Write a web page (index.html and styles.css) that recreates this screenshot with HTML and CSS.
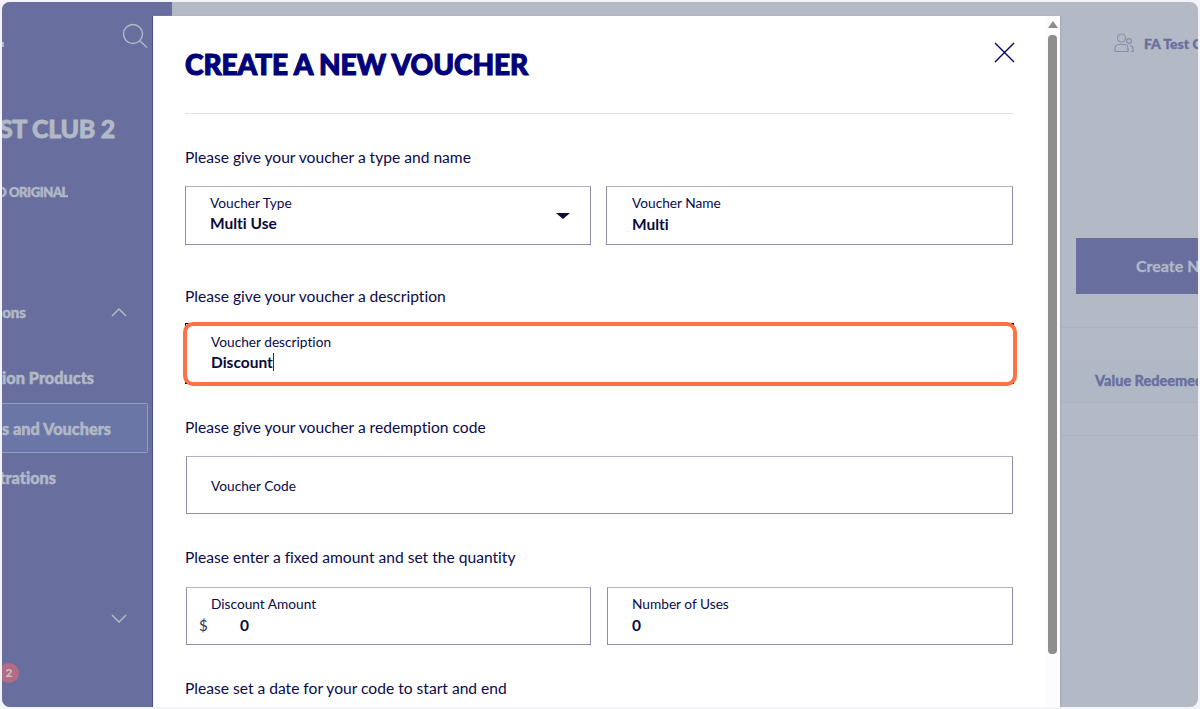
FILE: index.html
```html
<!DOCTYPE html>
<html lang="en">
<head>
    <meta charset="UTF-8">
    <title>Create a new voucher</title>
    <link rel="stylesheet" href="styles.css">
</head>
<body>
    <div class="screen">
        <aside class="sidebar">
            <span class="logo-tail"></span>
            <div class="search-row">
                <svg class="search-icon" width="26" height="26" viewBox="0 0 26 26" fill="none" stroke="#b2b9c6" stroke-width="1.4">
                    <circle cx="11" cy="11" r="9.5"/>
                    <path d="M18 18l7 6.5"/>
                </svg>
            </div>
            <div class="side-text club-name"><span>FA TEST CLUB 2</span></div>
            <div class="side-text club-type"><span>ADIDAS BRAND ORIGINAL</span></div>
            <div class="side-text menu-group">
                <span>Promotions</span>
                <svg class="chevron" width="16" height="9" viewBox="0 0 16 9" fill="none" stroke="#b2b9c6" stroke-width="1.5"><path d="M1 8l7-7 7 7"/></svg>
            </div>
            <div class="side-text menu-item item-products"><span>Promotion Products</span></div>
            <div class="side-text menu-item active"><span>Discounts and Vouchers</span></div>
            <div class="side-text menu-item item-reg"><span>Registrations</span></div>
            <div class="side-text menu-group second">
                <svg class="chevron" width="16" height="9" viewBox="0 0 16 9" fill="none" stroke="#b2b9c6" stroke-width="1.5"><path d="M1 1l7 7 7-7"/></svg>
            </div>
            <div class="badge">2</div>
        </aside>

        <main class="main">
            <div class="topbar">
                <svg width="20" height="20" viewBox="0 0 20 20" fill="none" stroke="#868ea9" stroke-width="1.2">
                    <circle cx="7.500" cy="5" r="4"/>
                    <circle cx="15" cy="8" r="2.4"/>
                    <path d="M1 18.5v-3c0-2.500 2-4 4-4h5c2 0 4 1.500 4 4v3z"/>
                    <path d="M16 12.500c1.600.2 3 1.200 3 3v3h-2"/>
                </svg>
                <span class="user-name">FA Test Club</span>
            </div>
            <button class="create-btn">Create New Voucher</button>
            <div class="table-line first"></div>
            <div class="table-head"><span>Value Redeemed</span></div>
            <div class="table-line second"></div>
        </main>

        <div class="modal">
            <div class="modal-body">
                <div class="modal-head">
                    <h1>CREATE A NEW VOUCHER</h1>
                    <svg class="close-icon" width="21" height="21" viewBox="0 0 21 21" fill="none" stroke="#00007a" stroke-width="1.4"><path d="M1 1l19 19M20 1L1 20"/></svg>
                </div>
                <hr>

                <section class="section section-first">
                    <p class="prompt">Please give your voucher a type and name</p>
                    <div class="field-row">
                        <div class="field select-field">
                            <label>Voucher Type</label>
                            <div class="value">Multi Use</div>
                            <span class="caret"></span>
                        </div>
                        <div class="field name-field">
                            <label>Voucher Name</label>
                            <div class="value">Multi</div>
                        </div>
                    </div>
                </section>

                <section class="section section-focus">
                    <p class="prompt">Please give your voucher a description</p>
                    <div class="field field-focus">
                        <label>Voucher description</label>
                        <div class="value"><span class="typed">Discount</span></div>
                        <div class="highlight"></div>
                    </div>
                </section>

                <section class="section section-code">
                    <p class="prompt">Please give your voucher a redemption code</p>
                    <div class="field field-empty inset">
                        <label>Voucher Code</label>
                    </div>
                </section>

                <section class="section">
                    <p class="prompt">Please enter a fixed amount and set the quantity</p>
                    <div class="field-row inset">
                        <div class="field amount-field">
                            <label>Discount Amount</label>
                            <div class="value amount"><span class="currency">$</span>0</div>
                        </div>
                        <div class="field">
                            <label>Number of Uses</label>
                            <div class="value">0</div>
                        </div>
                    </div>
                </section>

                <section class="section">
                    <p class="prompt">Please set a date for your code to start and end</p>
                </section>
            </div>
            <div class="scrollbar">
                <span class="scroll-arrow"></span>
                <span class="scroll-thumb"></span>
            </div>
        </div>
    </div>
</body>
</html>
```

FILE: styles.css
```css
html, body {
    margin: 0;
    height: 100%;
    overflow: hidden;
}
body {
    background: #f3f3f9;
    font-family: Lato, "Open Sans", sans-serif;
    font-variant-ligatures: none;
}
.screen {
    position: relative;
    display: flex;
    margin: 2px;
    height: 705px;
    border-radius: 8px;
    overflow: hidden;
    background: #b3bac6;
}

/* sidebar, dimmed behind the modal */
.sidebar {
    position: relative;
    flex: 0 0 170px;
    background: #686f9f;
    color: #b2b9c6;
}
.logo-tail {
    position: absolute;
    left: 0;
    top: 40px;
    width: 2px;
    height: 5px;
    background: #b2b9c6;
}
.search-row {
    display: flex;
    justify-content: flex-end;
    padding: 21px 24px 0 0;
    height: 30px;
}
.side-text {
    display: flex;
    justify-content: flex-end;
    align-items: center;
    white-space: nowrap;
    overflow: hidden;
    font-weight: 900;
    -webkit-text-stroke: 0.5px #b2b9c6;
}
.side-text span {
    flex: none;
}
.club-name {
    margin-top: 60px;
    height: 30px;
    width: 113px;
    font-size: 25px;
    letter-spacing: -0.3px;
    -webkit-text-stroke: 0.8px #b2b9c6;
}
.club-type {
    margin-top: 39px;
    height: 20px;
    width: 66px;
    font-size: 13px;
    letter-spacing: -0.4px;
}
.menu-group {
    margin-top: 98px;
    height: 24px;
    width: 124px;
    font-size: 15px;
    overflow: visible;
    justify-content: flex-start;
}
.menu-group span {
    margin-left: -54px;
}
.menu-group .chevron {
    position: absolute;
    left: 109px;
}
.menu-group.second {
    margin-top: 104px;
}
.menu-item {
    height: 50px;
    font-size: 16.3px;
}
.menu-group + .menu-item {
    margin-top: 28px;
}
.item-products {
    width: 92px;
}
.item-reg {
    width: 54px;
}
.menu-item.active {
    box-sizing: border-box;
    width: 146px;
    height: 50px;
    margin: 1px 0 -1px;
    padding-right: 36px;
    background: #6a76a5;
    border: 1px solid #959dbc;
    border-left: 0;
    border-radius: 0 2px 2px 0;
}
.badge {
    position: absolute;
    left: -3px;
    top: 661px;
    width: 20px;
    height: 20px;
    border-radius: 50%;
    background: #b26c83;
    color: #c9c0cc;
    font-size: 12px;
    font-weight: 900;
    line-height: 20px;
    text-align: center;
}

/* page behind the modal */
.main {
    flex: 1;
    min-width: 0;
}
.topbar {
    display: flex;
    align-items: center;
    height: 20px;
    margin: 31px 0 0 942px;
    white-space: nowrap;
    overflow: hidden;
}
.topbar svg,
.user-name {
    flex: none;
}
.user-name {
    margin-left: 10px;
    color: #686f9f;
    font-size: 14px;
    font-weight: 900;
    -webkit-text-stroke: 0.3px #686f9f;
}
.create-btn {
    display: block;
    margin: 185px 0 0 904px;
    width: 140px;
    height: 56px;
    padding: 0 0 2px 60px;
    border: 0;
    background: #686f9f;
    color: #b2b9c6;
    font-family: inherit;
    font-size: 16px;
    font-weight: 700;
    text-align: left;
    white-space: nowrap;
    overflow: hidden;
    -webkit-text-stroke: 0.3px #b2b9c6;
}
.table-line {
    height: 1px;
    background: #abb2c1;
}
.table-line.first {
    margin-top: 33px;
}
.table-head {
    margin-top: 32px;
    box-sizing: border-box;
    height: 43px;
    padding-left: 923px;
    line-height: 41px;
    background: #b1b8c5;
    border-bottom: 1px solid #abb2c1;
    color: #686f9f;
    font-size: 14.5px;
    font-weight: 900;
    white-space: nowrap;
    overflow: hidden;
    -webkit-text-stroke: 0.3px #686f9f;
}
.table-line.second {
    margin-top: 32px;
}

/* modal */
.modal {
    position: absolute;
    left: 150px;
    top: 14px;
    bottom: 0;
    width: 908px;
    display: flex;
    background: #fff;
    border-left: 1px solid #46508f;
    box-sizing: border-box;
    box-shadow: 1px 0 1px #a4abba;
}
.modal-body {
    box-sizing: border-box;
    flex: 1;
    padding: 32px 32px 0 32px;
    overflow: hidden;
}
.modal-head {
    display: flex;
    align-items: center;
    justify-content: space-between;
    height: 32px;
}
.modal-head h1 {
    margin: 0;
    color: #00007a;
    font-size: 28px;
    font-weight: 900;
    letter-spacing: -0.05px;
    line-height: 32px;
    -webkit-text-stroke: 1.1px #00007a;
}
.close-icon {
    margin: -23px -2px 0 0;
}
hr {
    height: 1px;
    margin: 33px 0 34px;
    border: 0;
    background: #e2e2e6;
}
.section {
    margin-bottom: 34px;
}
.section-first {
    margin-bottom: 42px;
}
.prompt {
    margin: 0 0 19px;
    height: 20px;
    color: #0a0a4c;
    font-size: 15.6px;
    line-height: 18px;
}
.section-first .prompt {
    margin-bottom: 18px;
}
.section-focus .prompt {
    margin-bottom: 16px;
}
.section-code .prompt {
    margin-bottom: 18px;
}
.field-row {
    display: flex;
    gap: 15px;
}
.field-row .field {
    flex: 1;
}
.field-row .select-field {
    flex: 0 0 406px;
}
.field-row .amount-field {
    flex: 0 0 405px;
    margin-right: 1px;
}
.inset {
    margin-left: 1px;
}
.field {
    position: relative;
    box-sizing: border-box;
    height: 58px;
    padding: 7px 24px 0;
    border: 1px solid #8f8fa8;
    border-top-color: #b3b3c0;
}
.section-first .field {
    height: 59px;
}
.name-field {
    padding-left: 25px;
}
.field label {
    display: block;
    height: 18px;
    color: #0a0a4c;
    font-size: 13.7px;
    line-height: 18px;
}
.value {
    margin-top: 2px;
    color: #0a0a3c;
    font-size: 15.5px;
    font-weight: 700;
    line-height: 20px;
}
.select-field .value {
    margin-top: 1px;
}
.amount {
    padding-left: 29px;
}
.currency {
    position: absolute;
    left: 12px;
    color: #33335f;
    font-size: 15px;
    font-weight: 400;
}
.caret {
    position: absolute;
    right: 20px;
    top: 26px;
    border-left: 7px solid transparent;
    border-right: 7px solid transparent;
    border-top: 6px solid #0a0a3c;
}
.field-focus {
    height: 61px;
    border: 1px solid #000;
    margin-right: -1px;
    padding: 9px 25px 0;
}
.field-focus .value {
    margin-top: 1px;
}
.typed {
    border-right: 1px solid #333;
}
.highlight {
    position: absolute;
    top: -2px;
    left: -3px;
    right: -4px;
    bottom: -3px;
    border: 4px solid #ff7043;
    border-radius: 10px;
}
.field-empty {
    display: flex;
    align-items: center;
    padding-top: 2px;
}

/* scrollbar */
.scrollbar {
    position: relative;
    flex: 0 0 15px;
    background: #fcfcfe;
}
.scroll-arrow {
    position: absolute;
    left: 3px;
    top: 5px;
    border-left: 5px solid transparent;
    border-right: 5px solid transparent;
    border-bottom: 7px solid #8d8d8d;
}
.scroll-thumb {
    position: absolute;
    left: 3px;
    top: 19px;
    width: 9px;
    height: 619px;
    border-radius: 4px;
    background: #8d8d8d;
}
```
